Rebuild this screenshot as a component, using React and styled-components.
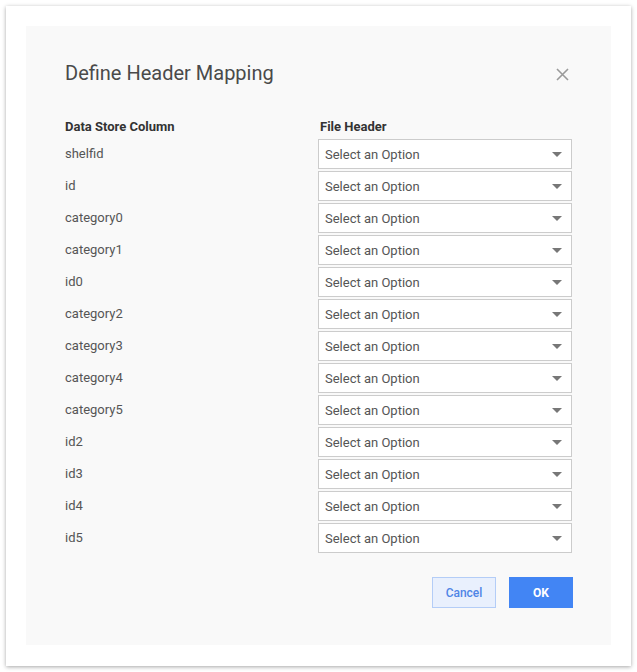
import React from 'react';
import styled, { createGlobalStyle } from 'styled-components';

const GlobalStyle = createGlobalStyle`
    * { box-sizing: border-box; }
    body {
        margin: 0;
        background: #fff;
        font-family: Roboto, "Liberation Sans", Arial, sans-serif;
    }
`;

const Frame = styled.div`
    margin: 6px;
    width: 625px;
    height: 660px;
    padding: 20px;
    background: #fff;
    box-shadow: 0 1px 4px rgba(0, 0, 0, 0.35);
`;

const Panel = styled.div`
    background: #f9f9f9;
    height: 619px;
    padding: 35px 39px 37px 39px;
    display: flex;
    flex-direction: column;
`;

const TitleRow = styled.div`
    display: flex;
    justify-content: space-between;
    align-items: center;
    height: 24px;
`;

const Title = styled.h2`
    margin: 0;
    font-size: 20px;
    line-height: 24px;
    font-weight: 400;
    color: #4a4a4a;
`;

const CloseButton = styled.button`
    width: 20px;
    height: 20px;
    margin-top: 3px;
    padding: 0;
    border: none;
    background: transparent;
    display: flex;
    align-items: center;
    justify-content: center;
    cursor: pointer;
`;

const MappingGrid = styled.div`
    margin-top: 34px;
    display: grid;
    grid-template-columns: 253px 254px;
    row-gap: 2px;
`;

const ColumnHead = styled.div`
    font-size: 13px;
    line-height: 16px;
    font-weight: 700;
    color: #333;
    margin-bottom: 2px;
    padding-left: ${p => (p.$shift ? '2px' : '0')};
`;

const Label = styled.div`
    font-size: 13px;
    line-height: 30px;
    color: #555;
`;

const SelectBox = styled.div`
    height: 30px;
    border: 1px solid #ccc;
    background: #fff;
    padding: 0 9px 0 6px;
    display: flex;
    align-items: center;
    justify-content: space-between;
    font-size: 13px;
    color: #555;
    cursor: pointer;
`;

const Footer = styled.div`
    margin-top: 24px;
    display: flex;
    justify-content: flex-end;
    gap: 13px;
    margin-right: -1px;
`;

const Button = styled.button`
    width: 64px;
    height: 31px;
    font-family: inherit;
    font-size: 12px;
    cursor: pointer;
    border: 1px solid ${p => (p.$primary ? '#4285f4' : '#b4cdf7')};
    background: ${p => (p.$primary ? '#4285f4' : '#e9f0fd')};
    color: ${p => (p.$primary ? '#fff' : '#4f85e6')};
    font-weight: ${p => (p.$primary ? 700 : 500)};
`;

const columns = [
    'shelfid', 'id', 'category0', 'category1', 'id0', 'category2', 'category3',
    'category4', 'category5', 'id2', 'id3', 'id4', 'id5',
];

const Caret = () => (
    <svg width="10" height="5" viewBox="0 0 10 5">
        <path d="M0 0h10L5 5z" fill="#777" />
    </svg>
);

const CloseIcon = () => (
    <svg width="13" height="13" viewBox="0 0 13 13">
        <path d="M1 1l11 11M12 1L1 12" stroke="#9a9a9a" strokeWidth="1.6" />
    </svg>
);

const App = () => {
    return (
        <>
            <GlobalStyle />
            <Frame>
                <Panel>
                    <TitleRow>
                        <Title>Define Header Mapping</Title>
                        <CloseButton aria-label="Close"><CloseIcon /></CloseButton>
                    </TitleRow>

                    <MappingGrid>
                        <ColumnHead>Data Store Column</ColumnHead>
                        <ColumnHead $shift>File Header</ColumnHead>
                        {columns.map((col) => (
                            <React.Fragment key={col}>
                                <Label>{col}</Label>
                                <SelectBox>
                                    <span>Select an Option</span>
                                    <Caret />
                                </SelectBox>
                            </React.Fragment>
                        ))}
                    </MappingGrid>

                    <Footer>
                        <Button>Cancel</Button>
                        <Button $primary>OK</Button>
                    </Footer>
                </Panel>
            </Frame>
        </>
    );
};

export default App;
